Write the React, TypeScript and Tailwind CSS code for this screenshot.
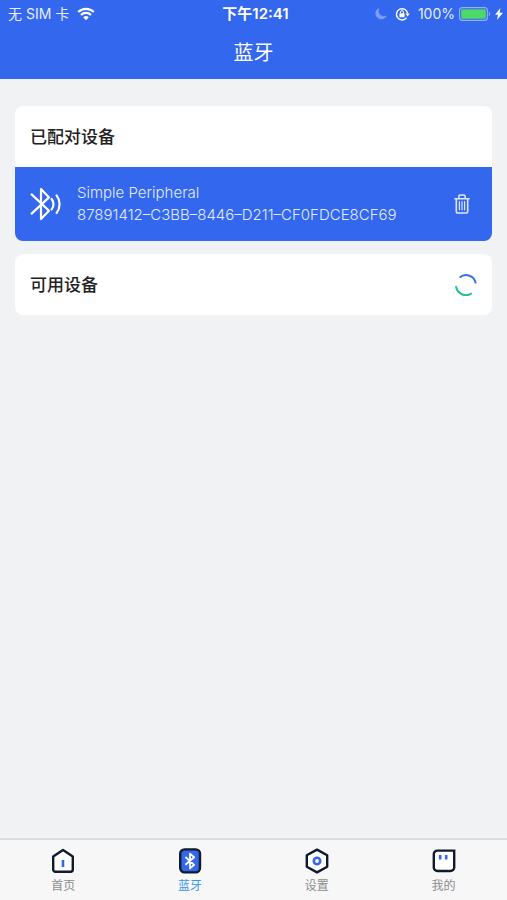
import type { ReactNode } from "react";

function WifiIcon() {
  return (
    <svg width="18" height="14" viewBox="0 0 18 14" fill="none" aria-hidden="true">
      <path d="M1.2 5a11.2 11.2 0 0 1 15.6 0" stroke="white" strokeWidth="2.4" />
      <path d="M4 8a7 7 0 0 1 10 0" stroke="white" strokeWidth="2.2" />
      <path d="M9 13.2 6.2 10.3a4 4 0 0 1 5.6 0Z" fill="white" />
    </svg>
  );
}

function MoonIcon() {
  return (
    <svg width="12" height="12" viewBox="0 0 12 12" aria-hidden="true">
      <path d="M3.4 .6a5.6 5.6 0 1 0 7.8 7.6A6 6 0 0 1 3.4 .6Z" fill="#7d9ff7" stroke="#7d9ff7" strokeWidth=".8" />
    </svg>
  );
}

function RotationLockIcon() {
  return (
    <svg width="15" height="14" viewBox="0 0 15 14" fill="none" aria-hidden="true">
      <path d="M11.6 10.6A5.6 5.6 0 1 1 12.6 6.6" stroke="white" strokeWidth="1.4" />
      <path d="M10.4 6.4h4.4l-2.2 3Z" fill="white" />
      <rect x="4.4" y="6.2" width="5.2" height="4" rx=".6" fill="white" />
      <path d="M5.5 6.4V5.2a1.5 1.5 0 0 1 3 0v1.2" stroke="white" />
    </svg>
  );
}

function BatteryIcon() {
  return (
    <svg width="32" height="14" viewBox="0 0 32 14" fill="none" aria-hidden="true">
      <rect x=".6" y=".6" width="27.8" height="12.8" rx="3" stroke="#93b0f9" strokeWidth="1.1" />
      <rect x="2.2" y="2.2" width="24.6" height="9.6" rx="1.4" fill="#4cd964" />
      <path d="M29.8 4.8a2.4 2.4 0 0 1 0 4.4Z" fill="#93b0f9" />
    </svg>
  );
}

function BoltIcon() {
  return (
    <svg width="8" height="12" viewBox="0 0 8 12" aria-hidden="true">
      <path d="M5.4 0 0 6.8h3L2 12l6-7.2H4.6Z" fill="white" />
    </svg>
  );
}

function BluetoothWavesIcon() {
  return (
    <svg width="32" height="34" viewBox="0 0 32 34" fill="none" stroke="white" strokeWidth="2.2" strokeLinecap="round" strokeLinejoin="round" aria-hidden="true">
      <path d="m1.6 7.4 17.4 16.4L11 32V2l8 8.4L1.6 26.6" />
      <path d="M21.6 12a8.8 8.8 0 0 1 0 10.4" />
      <path d="M26.6 8.4a14.5 14.5 0 0 1 0 17.6" />
    </svg>
  );
}

function TrashIcon() {
  return (
    <svg width="16" height="20" viewBox="0 0 16 20" fill="none" stroke="#dde6fe" strokeWidth="1.6" strokeLinecap="round" strokeLinejoin="round" aria-hidden="true">
      <path d="M.9 4.7h14.2M4.8 4.4V2.6A1.6 1.6 0 0 1 6.4 1h3.2a1.6 1.6 0 0 1 1.6 1.6v1.8" />
      <path d="M2.3 5v12.2A1.8 1.8 0 0 0 4.1 19h7.8a1.8 1.8 0 0 0 1.8-1.8V5" />
      <path d="M5.4 7.6v8.2M8 7.6v8.2M10.6 7.6v8.2" strokeWidth="1.2" />
    </svg>
  );
}

function SpinnerIcon() {
  return (
    <svg width="22" height="22" viewBox="0 0 22 22" fill="none" strokeWidth="2" role="img" aria-label="正在搜索">
      <path d="M4.6 3.4A10 10 0 0 1 20.8 9.4" stroke="#2f74e0" />
      <path d="M1 12.2A10 10 0 0 0 16.8 19.2" stroke="#22c184" />
    </svg>
  );
}

function HomeIcon() {
  return (
    <svg width="24" height="26" viewBox="0 0 24 26" fill="none" aria-hidden="true">
      <path d="M12 2 2.2 8.6v13A2.2 2.2 0 0 0 4.4 23.8h15.2a2.2 2.2 0 0 0 2.2-2.2v-13Z" fill="white" stroke="#101a2c" strokeWidth="2.4" strokeLinejoin="round" />
      <path d="M12 12v7" stroke="#3267ee" strokeWidth="2.6" />
    </svg>
  );
}

function BluetoothTabIcon() {
  return (
    <svg width="24" height="26" viewBox="0 0 24 26" fill="none" aria-hidden="true">
      <rect x="2.2" y="1.4" width="19.8" height="23" rx="4.4" fill="#3267ee" stroke="#101a2c" strokeWidth="2.4" />
      <path d="m7.4 9 8.8 7.8-4.2 3.6V5.6l4.2 3.6-8.8 7.6" stroke="white" strokeWidth="1.8" strokeLinejoin="round" />
    </svg>
  );
}

function SettingsIcon() {
  return (
    <svg width="24" height="26" viewBox="0 0 24 26" fill="none" aria-hidden="true">
      <path d="M12 1.6 22.2 7.2v11.6L12 24.4 1.8 18.8V7.2Z" fill="white" stroke="#101a2c" strokeWidth="2.4" strokeLinejoin="round" />
      <circle cx="12" cy="13" r="3.2" stroke="#3267ee" strokeWidth="2.6" />
    </svg>
  );
}

function ProfileIcon() {
  return (
    <svg width="24" height="26" viewBox="0 0 24 26" fill="none" aria-hidden="true">
      <path d="M5.4 2.6h16.8v16.8a3.6 3.6 0 0 1-3.6 3.6H5.4a3.6 3.6 0 0 1-3.6-3.6V6.2a3.6 3.6 0 0 1 3.6-3.6Z" fill="white" stroke="#101a2c" strokeWidth="2.4" />
      <path d="M8.2 7v4.6M14.2 7v4.6" stroke="#3267ee" strokeWidth="2.6" />
    </svg>
  );
}

function Tab({ label, icon, active = false }: { label: string; icon: ReactNode; active?: boolean }) {
  return (
    <a
      href="#"
      aria-current={active ? "page" : undefined}
      className={`flex flex-1 flex-col items-center gap-1 text-xs ${active ? "text-[#3c94f5]" : "text-[#8c8c8c]"}`}
    >
      {icon}
      <span>{label}</span>
    </a>
  );
}

export default function App() {
  return (
    <div className="flex min-h-screen flex-col bg-[#f1f2f4] font-['Inter','Noto_Sans_CJK_SC',sans-serif]">
      <header className="bg-[#3267ee] pb-2.5 text-white">
        <div className="grid h-7 grid-cols-[1fr_auto_1fr] items-center pr-1 pl-2 text-sm text-[#e8eefe]">
          <div className="flex items-center gap-2">
            <span>无 SIM 卡</span>
            <WifiIcon />
          </div>
          <span className="text-[15px] font-semibold text-white">下午12:41</span>
          <div className="flex items-center justify-end">
            <MoonIcon />
            <span className="ml-2">
              <RotationLockIcon />
            </span>
            <span className="ml-2">100%</span>
            <span className="ml-1">
              <BatteryIcon />
            </span>
            <span className="ml-1">
              <BoltIcon />
            </span>
          </div>
        </div>
        <h1 className="mt-[9px] text-center text-xl leading-8">蓝牙</h1>
      </header>

      <main className="flex flex-1 flex-col gap-[13px] px-[15px] pt-[27px]">
        <section className="overflow-hidden rounded-lg bg-white">
          <h2 className="flex h-[61px] items-center px-[15px] pt-0.5 text-[17px] font-medium text-[#222]">已配对设备</h2>
          <div className="flex items-center bg-[#3267ee] px-[15px] py-[15px] text-[#e4ebfe]">
            <BluetoothWavesIcon />
            <div className="ml-[15px] flex-1 text-[15px] font-light leading-[22px]">
              <p>Simple Peripheral</p>
              <p>87891412–C3BB–8446–D211–CF0FDCE8CF69</p>
            </div>
            <button type="button" aria-label="删除设备" className="mr-[7px]">
              <TrashIcon />
            </button>
          </div>
        </section>

        <section className="flex h-[61px] items-center justify-between rounded-lg bg-white px-[15px]">
          <h2 className="pt-0.5 text-[17px] font-medium text-[#222]">可用设备</h2>
          <SpinnerIcon />
        </section>
      </main>

      <nav className="flex border-t-2 border-[#dcdde0] bg-[#f7f7f8] pt-2 pb-1.5">
        <Tab label="首页" icon={<HomeIcon />} />
        <Tab label="蓝牙" icon={<BluetoothTabIcon />} active />
        <Tab label="设置" icon={<SettingsIcon />} />
        <Tab label="我的" icon={<ProfileIcon />} />
      </nav>
    </div>
  );
}
